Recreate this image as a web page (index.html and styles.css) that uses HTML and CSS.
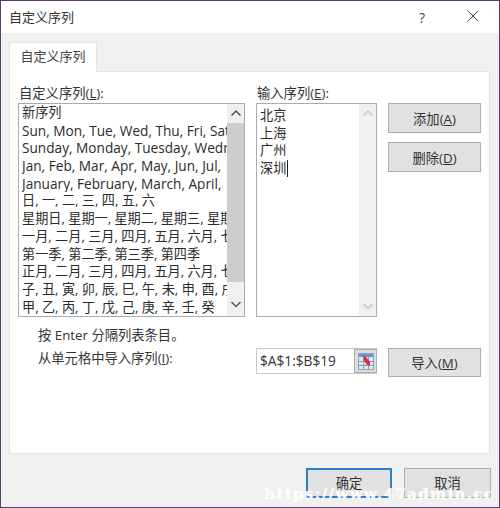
FILE: index.html
```html
<!DOCTYPE html>
<html lang="zh-CN">
<head>
<meta charset="utf-8">
<title>自定义序列</title>
<link rel="stylesheet" href="styles.css">
</head>
<body>
<div class="window">
  <header class="titlebar">
    <span class="title">自定义序列</span>
    <span class="help">?</span>
    <svg class="close" width="12" height="12" viewBox="0 0 12 12"><path d="M0.5 0.5L11.5 11.5M11.5 0.5L0.5 11.5" stroke="#444" stroke-width="1" fill="none"/></svg>
  </header>
  <main class="body">
    <div class="tabs"><div class="tab">自定义序列</div></div>
    <section class="panel">
      <div class="cols labels">
        <label>自定义序列(<u>L</u>):</label>
        <label>输入序列(<u>E</u>):</label>
      </div>
      <div class="cols lists">
        <div class="listbox">
          <ul class="items">
            <li>新序列</li>
            <li class="latin">Sun, Mon, Tue, Wed, Thu, Fri, Sat</li>
            <li class="latin">Sunday, Monday, Tuesday, Wednesday, Thursday</li>
            <li class="latin">Jan, Feb, Mar, Apr, May, Jun, Jul,</li>
            <li class="latin">January, February, March, April,</li>
            <li>日, 一, 二, 三, 四, 五, 六</li>
            <li>星期日, 星期一, 星期二, 星期三, 星期四, 星期五</li>
            <li>一月, 二月, 三月, 四月, 五月, 六月, 七月, 八月</li>
            <li>第一季, 第二季, 第三季, 第四季</li>
            <li>正月, 二月, 三月, 四月, 五月, 六月, 七月, 八月</li>
            <li>子, 丑, 寅, 卯, 辰, 巳, 午, 未, 申, 酉, 戌, 亥</li>
            <li>甲, 乙, 丙, 丁, 戊, 己, 庚, 辛, 壬, 癸</li>
          </ul>
          <div class="scrollbar">
            <svg class="arrow" width="18" height="19" viewBox="0 0 18 19"><path d="M4.5 11.5L9 7L13.5 11.5" stroke="#555" stroke-width="1.5" fill="none"/></svg>
            <div class="thumb"></div>
            <svg class="arrow" width="18" height="34" viewBox="0 0 18 34"><path d="M4.5 20L9 24.5L13.5 20" stroke="#555" stroke-width="1.5" fill="none"/></svg>
          </div>
        </div>
        <div class="listbox">
          <div class="items entry">
            <div>北京</div>
            <div>上海</div>
            <div>广州</div>
            <div><span class="caret">深圳</span></div>
          </div>
          <div class="scrollbar off">
            <svg class="arrow" width="18" height="19" viewBox="0 0 18 19"><path d="M4.5 11.5L9 7L13.5 11.5" stroke="#c4c4c4" stroke-width="1.5" fill="none"/></svg>
            <div class="gap"></div>
            <svg class="arrow" width="18" height="19" viewBox="0 0 18 19"><path d="M4.5 7L9 11.5L13.5 7" stroke="#c4c4c4" stroke-width="1.5" fill="none"/></svg>
          </div>
        </div>
        <div class="side">
          <button class="btn">添加(<u>A</u>)</button>
          <button class="btn">删除(<u>D</u>)</button>
        </div>
      </div>
      <div class="cols imports">
        <div class="notes">
          <p>按 Enter 分隔列表条目。</p>
          <p>从单元格中导入序列(<u>I</u>):</p>
        </div>
        <div class="range">
          <span class="value">$A$1:$B$19</span>
          <span class="picker">
            <svg width="16" height="17" viewBox="0 0 16 17">
              <rect x="0.5" y="0.5" width="15" height="16" fill="#dfe9f4" stroke="#8ba6c4"/>
              <rect x="1" y="1" width="14" height="3" fill="#6f95c2"/>
              <path d="M0 8.5H16M0 12.5H16M5.5 4V17M10.5 4V17" stroke="#7f9dbf" stroke-width="1"/>
              <path d="M5 3L8 4L12 9L12 12.5L9 12L6 8Z" fill="#d6303a"/>
            </svg>
          </span>
        </div>
        <button class="btn tall">导入(<u>M</u>)</button>
      </div>
    </section>
    <footer class="actions">
      <button class="btn foot primary">确定</button>
      <button class="btn foot ghost">取消</button>
    </footer>
  </main>
  <div class="watermark">https://www.47admin.cc</div>
</div>
</body>
</html>
```
FILE: styles.css
```css
* { box-sizing: border-box; }
html, body { margin: 0; padding: 0; background: #fff; }
body {
  width: 500px;
  height: 508px;
  overflow: hidden;
  font-family: "Open Sans", "Noto Sans CJK SC", sans-serif;
  font-size: 13px;
  color: #333;
}
.window {
  position: relative;
  width: 500px;
  height: 508px;
  border: 1px solid #5b3c6c;
  display: flex;
  flex-direction: column;
  overflow: hidden;
}
.titlebar {
  height: 32px;
  flex: none;
  background: #fff;
  display: flex;
  align-items: center;
  padding-left: 8px;
}
.title { flex: 1; line-height: 32px; color: #333; }
.help { width: 12px; margin-right: 39px; text-align: center; font-size: 14px; color: #444; }
.close { margin-right: 20px; margin-bottom: 2px; }
.body {
  flex: 1;
  min-height: 0;
  background: #f0f0f0;
  padding: 9px 9px 0 8px;
  display: flex;
  flex-direction: column;
}
.tabs { height: 29px; flex: none; display: flex; }
.tab {
  width: 88px;
  height: 30px;
  background: #fff;
  border: 1px solid #e3e3e3;
  border-bottom: 0;
  text-align: center;
  line-height: 27px;
  position: relative;
  z-index: 1;
  color: #444;
}
.panel {
  height: 383px;
  flex: none;
  background: #fff;
  border: 1px solid #e3e3e3;
  padding: 11px 8px 0 8px;
}
.cols {
  display: grid;
  grid-template-columns: 227px 121px 93px;
  column-gap: 11px;
}
.labels { height: 20px; line-height: 20px; color: #333; font-size: 13.3px; }
.labels label { padding-left: 1px; }
.lists { height: 214px; }
.listbox {
  display: flex;
  height: 214px;
  border: 1px solid #ababab;
  background: #fff;
  overflow: hidden;
}
.items {
  flex: 1;
  min-width: 0;
  list-style: none;
  margin: 0;
  padding: 0 0 0 3px;
  overflow: hidden;
  font-size: 13.15px;
}
.items li, .entry div {
  height: 17.7px;
  line-height: 17.7px;
  white-space: nowrap;
  overflow: hidden;
  color: #2b2b2b;
}
.items li { margin-right: -1px; }
.items li.latin { font-size: 13.65px; }
.entry { padding-top: 3px; }
.scrollbar {
  width: 17px;
  flex: none;
  background: #f0f0f0;
  display: flex;
  flex-direction: column;
}
.arrow { display: block; flex: none; }
.thumb { flex: 1; background: #cdcdcd; }
.gap { flex: 1; }
.caret { border-right: 1px solid #222; padding-right: 1px; }
.side { display: flex; flex-direction: column; gap: 9px; }
.btn {
  display: block;
  width: 93px;
  height: 30px;
  padding: 0;
  background: #e1e1e1;
  border: 1px solid #adadad;
  font: inherit;
  font-size: 13.3px;
  color: #333;
  text-align: center;
}
.imports { align-items: start; margin-top: 31px; }
.notes { margin-top: -24px; padding-left: 20px; font-size: 13.3px; }
.notes p { margin: 0; height: 23px; line-height: 23px; color: #333; }
.range {
  height: 26px;
  display: flex;
  border: 1px solid #c8c8c8;
  border-right: 0;
  background: #fff;
}
.value { flex: 1; padding-left: 3px; line-height: 23px; color: #333; font-size: 13.7px; }
.picker {
  width: 23px;
  background: #dcdcdc;
  border: 1px solid #adadad;
  display: flex;
  align-items: center;
  justify-content: center;
}
.tall { height: 29px; }
.actions {
  display: flex;
  justify-content: flex-end;
  gap: 12px;
  padding-top: 14px;
}
.foot { width: 86px; height: 30px; padding-bottom: 2px; }
.primary { border: 2px solid #2f7fc6; }
.ghost { width: 87px; margin-right: -1px; background: #e1e1e1; }
.watermark {
  position: absolute;
  left: 263px;
  top: 484px;
  font-family: "DejaVu Serif", serif;
  font-weight: 700;
  font-size: 15px;
  letter-spacing: 1.4px;
  color: #fff;
  white-space: nowrap;
  opacity: 0.92;
  text-shadow: 0 0 1px #fff;
}
```
